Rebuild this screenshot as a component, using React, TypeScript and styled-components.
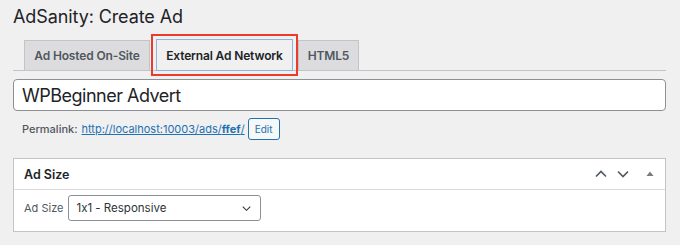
import React, { FC } from "react";
import styled, { createGlobalStyle } from "styled-components";

const GlobalStyle = createGlobalStyle`
  html, body {
    margin: 0;
    padding: 0;
    background: #f0f0f1;
  }
  body {
    font-family: Inter, "Noto Sans", sans-serif;
    font-feature-settings: "calt" 0;
    color: #1d2327;
  }
`;

const Page = styled.div`
  padding: 0 14px 0 13px;
`;

const Title = styled.h1`
  margin: 0;
  height: 34px;
  line-height: 34px;
  font-size: 18px;
  font-weight: 400;
  letter-spacing: -0.1px;
  color: #1d2327;
`;

const TabNav = styled.nav`
  display: flex;
  align-items: flex-end;
  height: 36px;
  padding-left: 11px;
  border-bottom: 1px solid #c3c4c7;
`;

const Tab = styled.div<{ $active?: boolean; $width: number }>`
  box-sizing: border-box;
  display: flex;
  align-items: center;
  justify-content: center;
  width: ${({ $width }) => $width}px;
  height: ${({ $active }) => ($active ? "32px" : "30px")};
  margin-right: ${({ $active }) => ($active ? "5px" : "6px")};
  margin-bottom: ${({ $active }) => ($active ? "-1px" : "0")};
  font-size: 12px;
  font-weight: 600;
  letter-spacing: -0.15px;
  color: ${({ $active }) => ($active ? "#1d2327" : "#50575e")};
  background: ${({ $active }) => ($active ? "#f0f0f1" : "#dcdcde")};
  border: 1px solid ${({ $active }) => ($active ? "#8fb3dc" : "#c3c4c7")};
  border-bottom: ${({ $active }) => ($active ? "1px solid #8fb3dc" : "none")};
  outline: ${({ $active }) => ($active ? "2px solid #ec3b2c" : "none")};
  outline-offset: 3px;
`;

const TitleInput = styled.div`
  box-sizing: border-box;
  margin-top: 8px;
  height: 32px;
  display: flex;
  align-items: center;
  padding: 0 8px;
  font-size: 18px;
  letter-spacing: -0.5px;
  background: #fff;
  border: 1px solid #8c8f94;
  border-radius: 4px;
`;

const PermalinkRow = styled.div`
  display: flex;
  align-items: center;
  margin-top: 7px;
  padding-left: 9px;
  height: 22px;
  font-size: 11px;
  color: #50575e;
`;

const Label = styled.span`
  font-weight: 500;
  margin-right: 4px;
`;

const Link = styled.a`
  color: #2271b1;
  text-decoration: underline;
  b {
    font-weight: 700;
  }
`;

const SmallButton = styled.span`
  box-sizing: border-box;
  display: inline-flex;
  align-items: center;
  justify-content: center;
  margin-left: 3px;
  width: 32px;
  height: 22px;
  font-size: 10px;
  color: #2271b1;
  background: #f6f7f7;
  border: 1px solid #2271b1;
  border-radius: 3px;
`;

const Postbox = styled.section`
  margin-top: 18px;
  background: #fff;
  border: 1px solid #c3c4c7;
`;

const PostboxHeader = styled.div`
  display: flex;
  align-items: center;
  height: 30px;
  padding: 0 10px;
  border-bottom: 1px solid #dcdcde;
`;

const PostboxTitle = styled.h2`
  flex: 1;
  margin: 0;
  font-size: 12.5px;
  font-weight: 600;
  color: #1d2327;
`;

const HandleActions = styled.div`
  display: flex;
  align-items: center;
  gap: 10px;
  color: #50575e;
  svg {
    display: block;
  }
`;

const ToggleIndicator = styled.span`
  display: block;
  margin-left: 7px;
  margin-right: 1px;
`;

const PostboxBody = styled.div`
  display: flex;
  align-items: center;
  gap: 5px;
  padding: 5px 10px 10px;
`;

const FieldLabel = styled.label`
  font-size: 11px;
  color: #50575e;
`;

const Select = styled.div`
  box-sizing: border-box;
  display: flex;
  align-items: center;
  justify-content: space-between;
  width: 193px;
  height: 26px;
  padding: 0 9px 0 7px;
  font-size: 11.5px;
  color: #2c3338;
  background: #fff;
  border: 1px solid #8c8f94;
  border-radius: 3px;
  svg {
    display: block;
  }
`;

const Chevron: FC<{ dir: "up" | "down"; size?: number; weight?: number }> = ({
  dir,
  size = 12,
  weight = 1.6,
}) => (
  <svg width={size} height={size} viewBox="0 0 12 12" fill="none">
    <path
      d={dir === "up" ? "M1 8.5 6 3.5 11 8.5" : "M1 3.5 6 8.5 11 3.5"}
      stroke="currentColor"
      strokeWidth={weight}
    />
  </svg>
);

const Triangle: FC = () => (
  <svg width="8" height="8" viewBox="0 0 8 8">
    <path d="M4 1.5 7.5 6H0.5Z" fill="#787c82" />
  </svg>
);

const App: FC = () => (
  <>
    <GlobalStyle />
    <Page>
      <Title>AdSanity: Create Ad</Title>
      <TabNav>
        <Tab $width={126}>Ad Hosted On-Site</Tab>
        <Tab $width={137} $active>
          External Ad Network
        </Tab>
        <Tab $width={61}>HTML5</Tab>
      </TabNav>
      <TitleInput>WPBeginner Advert</TitleInput>
      <PermalinkRow>
        <Label>Permalink:</Label>
        <Link>
          http://localhost:10003/ads/<b>ffef</b>/
        </Link>
        <SmallButton>Edit</SmallButton>
      </PermalinkRow>
      <Postbox>
        <PostboxHeader>
          <PostboxTitle>Ad Size</PostboxTitle>
          <HandleActions>
            <Chevron dir="up" />
            <Chevron dir="down" />
            <ToggleIndicator>
              <Triangle />
            </ToggleIndicator>
          </HandleActions>
        </PostboxHeader>
        <PostboxBody>
          <FieldLabel>Ad Size</FieldLabel>
          <Select>
            <span>1x1 - Responsive</span>
            <Chevron dir="down" size={9} weight={1.4} />
          </Select>
        </PostboxBody>
      </Postbox>
    </Page>
  </>
);

export default App;
